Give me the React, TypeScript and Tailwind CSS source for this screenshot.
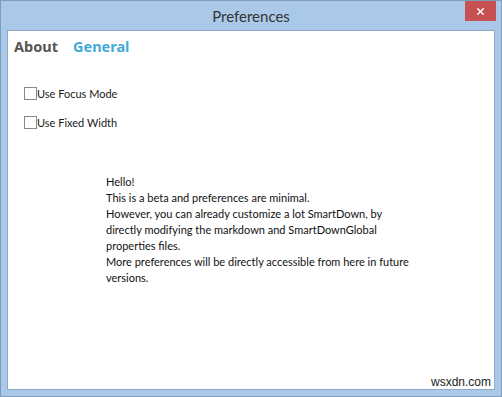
import { X } from 'lucide-react';

function CheckRow({ label }: { label: string }) {
  return (
    <label className="flex items-center h-[13px]">
      <span className="w-[13px] h-[13px] border border-[#8a8a8a] bg-white shrink-0" />
      <span className="text-[11px] leading-[13px] text-[#1a1a1a]">{label}</span>
    </label>
  );
}

export default function App() {
  return (
    <div
      className="w-[502px] h-[397px] bg-[#aac9e8] border border-[#7f9dbf] flex flex-col"
      style={{ fontFamily: 'Lato, "Noto Sans", Arial, sans-serif' }}
    >
      {/* Title bar */}
      <div className="relative h-[29px] flex items-center justify-center">
        <span className="text-[15px] text-[#333] pt-[1px]">Preferences</span>
        <button className="absolute right-[5px] top-0 w-[31px] h-[20px] bg-[#c75050] flex items-center justify-center">
          <X className="w-[11px] h-[11px] text-white" strokeWidth={3} />
        </button>
      </div>

      {/* Client area */}
      <div className="mx-[6px] mb-[6px] flex-1 bg-white border border-[#8fa9c6] flex flex-col">
        <div
          className="flex items-center gap-[15px] pl-[6px] pt-[5px] h-[26px]"
          style={{ fontFamily: '"Noto Sans", Arial, sans-serif' }}
        >
          <span className="text-[14.5px] font-bold text-[#555]">About</span>
          <span className="text-[14.5px] font-bold text-[#42aad8]">General</span>
        </div>

        <div className="pl-[16px] pt-[30px] flex flex-col gap-[16px]">
          <CheckRow label="Use Focus Mode" />
          <CheckRow label="Use Fixed Width" />
        </div>

        <div className="pl-[98px] pt-[45px] text-[11px] leading-[16px] text-[#111] w-[404px]">
          <p>Hello!</p>
          <p>This is a beta and preferences are minimal.</p>
          <p>However, you can already customize a lot SmartDown, by directly modifying the markdown and SmartDownGlobal properties files.</p>
          <p>More preferences will be directly accessible from here in future versions.</p>
        </div>

        <div className="mt-auto flex justify-end pr-[3px]">
          <span className="text-[12px] leading-[14px] text-[#222]" style={{ fontFamily: '"Liberation Sans", Arial, sans-serif' }}>wsxdn.com</span>
        </div>
      </div>
    </div>
  );
}
